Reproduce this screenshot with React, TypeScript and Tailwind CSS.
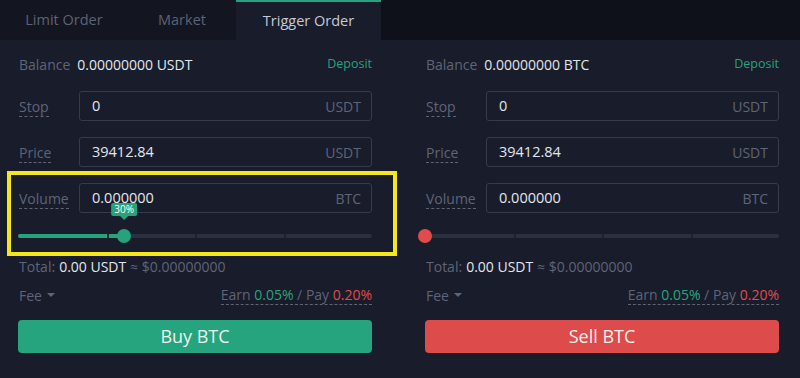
import React from "react";

type Side = "buy" | "sell";

const Field = ({ label, value, unit }: { label: string; value: string; unit: string }) => (
  <div className="flex items-center h-[30px]">
    <div className="w-[61px] shrink-0 pl-px">
      <span className="text-[14px] text-[#5f6479] border-b border-dashed border-[#5f6479] leading-[18px] inline-block">
        {label}
      </span>
    </div>
    <div className="flex-1 h-full flex items-center justify-between border border-[#363a4c] rounded-[3px] pl-3 pr-[10px]">
      <span className="text-[14.5px] text-[#e3e6ee]">{value}</span>
      <span className="text-[14px] text-[#5f6479]">{unit}</span>
    </div>
  </div>
);

const Slider = ({ side, percent }: { side: Side; percent: number }) => {
  const color = side === "buy" ? "#26a27c" : "#e04c4c";
  return (
    <div className="relative h-5 mt-[13px]">
      <div className="absolute left-0 right-0 top-[8px] h-[4px] rounded-full bg-[#2b2f40]" />
      <div
        className="absolute left-0 top-[8px] h-[4px] rounded-full"
        style={{ width: `${percent}%`, background: color }}
      />
      {[25, 50, 75].map((m) => (
        <div
          key={m}
          className="absolute top-[8px] h-[4px] w-[2px] bg-[#1f2231]"
          style={{ left: `${m}%` }}
        />
      ))}
      <div
        className="absolute top-[3px] w-[14px] h-[14px] rounded-full -ml-[7px]"
        style={{ left: `${percent}%`, background: color }}
      />
      {percent > 0 && (
        <div
          className="absolute -top-[23px] -translate-x-1/2 flex flex-col items-center"
          style={{ left: `${percent}%` }}
        >
          <div className="bg-[#26a27c] text-white text-[10px] leading-[13px] px-[3px] rounded-[2px]">
            {percent}%
          </div>
          <div className="w-0 h-0 border-l-[4px] border-r-[4px] border-t-[4px] border-l-transparent border-r-transparent border-t-[#26a27c]" />
        </div>
      )}
    </div>
  );
};

const OrderColumn = ({ side }: { side: Side }) => {
  const buy = side === "buy";
  return (
    <div className="relative flex flex-col pt-[14px]">
      <div className="flex items-center justify-between h-5">
        <div className="flex items-center gap-[7px] text-[14px] pl-px">
          <span className="text-[#5f6479]">Balance</span>
          <span className="text-[#e3e6ee]">{buy ? "0.00000000 USDT" : "0.00000000 BTC"}</span>
        </div>
        <span className="text-[12.5px] text-[#26a27c]">Deposit</span>
      </div>
      <div className="mt-[17px] flex flex-col gap-4">
        <Field label="Stop" value="0" unit="USDT" />
        <Field label="Price" value="39412.84" unit="USDT" />
        <Field label="Volume" value="0.000000" unit="BTC" />
      </div>
      <Slider side={side} percent={buy ? 30 : 0} />
      <div className="mt-[10px] h-5 flex items-center text-[14px] pl-px">
        <span className="text-[#5f6479]">Total:</span>
        <span className="text-[#e3e6ee] ml-1">0.00 USDT</span>
        <span className="text-[#5f6479] ml-1">≈ $0.00000000</span>
      </div>
      <div className="mt-[9px] h-5 flex items-center justify-between text-[14px]">
        <div className="flex items-center gap-[5px] text-[#5f6479] pl-px">
          <span>Fee</span>
          <span className="w-0 h-0 border-l-[4px] border-r-[4px] border-t-[4px] border-l-transparent border-r-transparent border-t-[#5f6479]" />
        </div>
        <div className="border-b border-dashed border-[#5f6479] leading-[19px]">
          <span className="text-[#5f6479]">Earn </span>
          <span className="text-[#27a67e]">0.05%</span>
          <span className="text-[#5f6479]"> / Pay </span>
          <span className="text-[#e04c4c]">0.20%</span>
        </div>
      </div>
      <button
        className={`mt-[15px] h-[33px] rounded-[4px] text-[18px] text-[#eef2f0] ${
          buy ? "bg-[#25a47d]" : "bg-[#de4b4b]"
        }`}
      >
        {buy ? "Buy BTC" : "Sell BTC"}
      </button>
      {buy && (
        <div className="absolute left-[-11px] top-[131px] w-[390px] h-[85px] border-4 border-[#f4e81c] pointer-events-none" />
      )}
    </div>
  );
};

export default function App() {
  const tabs = [
    { label: "Limit Order", w: "w-[128px]" },
    { label: "Market", w: "w-[108px]" },
    { label: "Trigger Order", w: "w-[145px]" },
  ];
  return (
    <div
      className="w-[800px] h-[378px] bg-[#191c2a] overflow-hidden"
      style={{ fontFamily: '"Open Sans", "Noto Sans", sans-serif' }}
    >
      <div className="h-10 flex bg-[#0f111a]">
        {tabs.map((t, i) => {
          const active = i === 2;
          return (
            <div
              key={t.label}
              className={`h-full flex items-center justify-center text-[14.5px] ${t.w} ${
                active
                  ? "bg-[#191c2a] text-[#c6cad8] border-t-2 border-[#26a27c]"
                  : "bg-[#131520] text-[#5d6276]"
              }`}
            >
              {t.label}
            </div>
          );
        })}
      </div>
      <div className="grid grid-cols-[354px_354px] gap-x-[53px] pl-[18px]">
        <OrderColumn side="buy" />
        <OrderColumn side="sell" />
      </div>
    </div>
  );
}
